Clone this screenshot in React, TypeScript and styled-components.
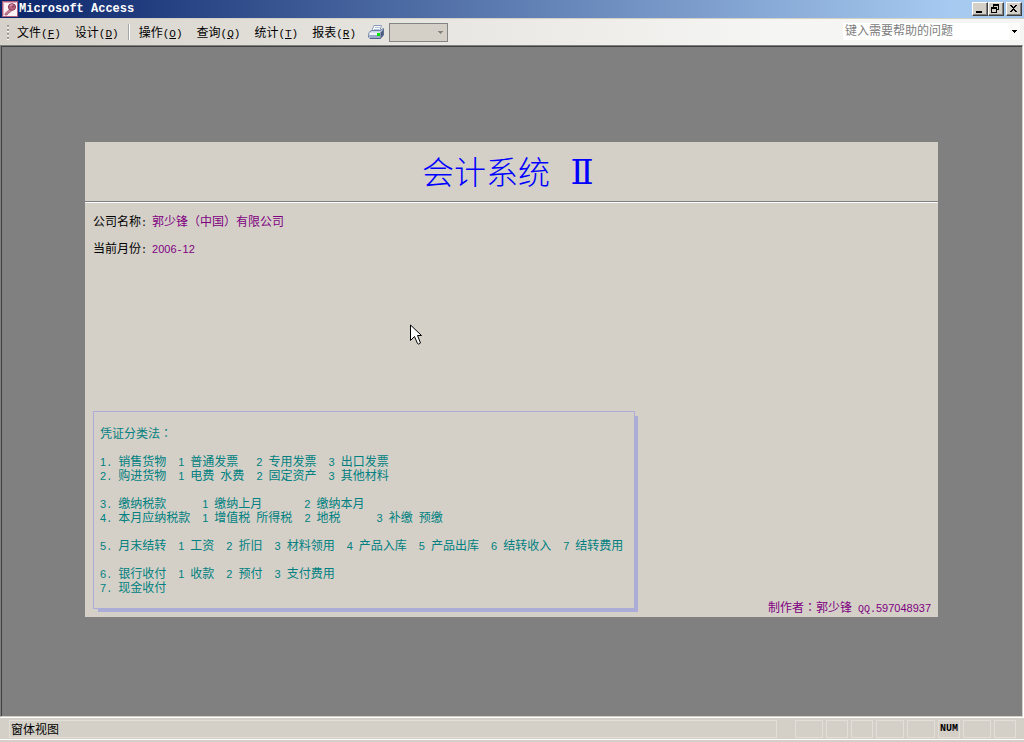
import React from "react";
import styled, { createGlobalStyle } from "styled-components";

const cjk = `"Noto Sans CJK SC", sans-serif`;
const face = "#d4d0c8";
const lilac = "#acacd8";

const GlobalStyle = createGlobalStyle`
  * { box-sizing: border-box; }
  body { margin: 0; background: ${face}; font: 12px/14px ${cjk}; color: #000; }
  button, input, select { font: inherit; color: inherit; border-radius: 0; }
`;

const Window = styled.div`
  display: flex;
  flex-direction: column;
  min-height: 100vh;
`;

const TitleBar = styled.header`
  display: flex;
  align-items: center;
  height: 18px;
  padding: 0 2px;
  background: linear-gradient(90deg, #0a246a, #a6caf0 93%);
`;

const AppTitle = styled.span`
  flex: 1;
  padding-left: 1px;
  color: #fff;
  font: bold 12px/18px "Liberation Mono", monospace;
`;

const Caption = styled.button<{ $gap?: boolean }>`
  width: 16px;
  height: 14px;
  margin-left: ${(p) => (p.$gap ? 2 : 0)}px;
  padding: 0;
  border: 1px solid;
  border-color: #fff #404040 #404040 #fff;
  box-shadow: inset -1px -1px #808080;
  background: ${face};
  svg { display: block; }
`;

const MenuBar = styled.nav`
  display: flex;
  align-items: center;
  height: 27px;
  padding: 0 4px 0 7px;
  border-top: 1px solid ${face};
  background: linear-gradient(90deg, #d6d2ca, #f5f5f3 75%);
`;

const Grip = styled.span`
  width: 3px;
  height: 15px;
  background: repeating-linear-gradient(#a09c94 0 2px, #fff 2px 3px, ${face} 3px 4px) 0 0 / 2px 100% no-repeat;
`;

const MenuItem = styled.button`
  display: flex;
  height: 22px;
  align-items: center;
  padding: 0 7px;
  border: 0;
  background: none;
  white-space: pre;
`;

const Hotkey = styled.span`
  font: 11px/0 "Liberation Mono", monospace;
`;

const Separator = styled.span`
  width: 2px;
  height: 16px;
  margin: 0 2px;
  background: linear-gradient(90deg, #a6a6a6 50%, #fff 50%);
`;

const ToolButton = styled.button`
  width: 16px;
  height: 16px;
  margin: 0 5px;
  padding: 0;
  border: 0;
  background: none;
  svg { display: block; }
`;

const Combo = styled.span`
  display: grid;
  grid-template-columns: 1fr 9px;
  align-items: center;
  width: 59px;
  height: 19px;
  border: 1px solid #848484;
  background: ${face};
`;

const ComboSelect = styled.select`
  width: 100%;
  height: 17px;
  border: 0;
  appearance: none;
  background: none;
`;

const HelpBox = styled.span`
  display: flex;
  width: 177px;
  height: 17px;
  margin: 0 0 1px auto;
  background: #fff;
`;

const HelpInput = styled.input`
  flex: 1;
  min-width: 0;
  padding: 0 2px 3px;
  border: 0;
  background: #fff;
  &::placeholder { color: #808080; opacity: 1; }
`;

const DropButton = styled.button`
  display: grid;
  place-items: center;
  width: 11px;
  padding: 0;
  border: 0;
  background: #fbfbfa;
`;

const Workspace = styled.main`
  flex: 1;
  display: flex;
  margin-right: 1px;
  padding: 95px 84px 99px 83px;
  border: 1px solid;
  border-color: #808080 ${face} ${face} #808080;
  box-shadow: inset 1px 1px #404040, 1px 0 #fff;
  background: #808080;
`;

const Form = styled.section`
  position: relative;
  flex: 1;
  display: flex;
  flex-direction: column;
  margin: 1px 0 0 1px;
  background: ${face};
`;

const Heading = styled.h1`
  display: flex;
  justify-content: center;
  gap: 16px;
  height: 60px;
  margin: 0;
  padding-right: 3px;
  border-bottom: 1px solid #808080;
  box-shadow: 0 1px #fff;
  color: #0000ff;
  font: 300 32px/56px ${cjk};
`;

const Numeral = styled.span`
  width: 32px;
  text-align: center;
  font: 34px/60px "DejaVu Serif", serif;
`;

const Details = styled.dl`
  flex: 1;
  display: flex;
  flex-direction: column;
  gap: 13px;
  margin: 0;
  padding: 12px 8px;
`;

const Detail = styled.div`
  display: flex;
  gap: 5px;
  dd { margin: 0; color: #800080; }
`;

const Footer = styled.footer`
  display: flex;
  justify-content: space-between;
  align-items: flex-end;
  padding: 0 7px 3px 8px;
`;

const Legend = styled.section`
  margin-bottom: 5px;
  padding: 14px 11px 14px 6px;
  border: 1px solid ${lilac};
  box-shadow: 4px 4px 0 -1px ${lilac};
  color: #008080;
`;

const Line = styled.p`
  height: 14px;
  margin: 0;
  white-space: pre;
`;

const Credit = styled.p`
  margin: 0;
  color: #800080;
  white-space: pre;
`;

const HalfWidth = styled.span`
  font: 10px/0 "Liberation Mono", monospace;
`;

const Digits = styled.span`
  font: 11px/0 "Liberation Sans", sans-serif;
`;

const Centred = styled.span`
  font: 12px/0 "Noto Sans CJK TC", sans-serif;
`;

const StatusBar = styled.footer`
  display: flex;
  gap: 3px;
  height: 25px;
  padding: 2px 8px 2px 9px;
  border-top: 1px solid #fff;
  background: linear-gradient(#fff, #fff) 0 21px / 100% 1px no-repeat ${face};
`;

const StatusCell = styled.span<{ $w: number }>`
  width: ${(p) => p.$w}px;
  height: 18px;
  border: 1px solid #e2dfd8;
  font: bold 10px/16px "Liberation Mono", monospace;
  padding-left: 1px;
`;

const StatusText = styled.span`
  flex: 1;
  height: 18px;
  margin-right: 15px;
  padding-left: 1px;
  border: 1px solid #e2dfd8;
  line-height: 16px;
`;

/* Sets Latin characters at half the width of a Chinese character,
   and the full-width colon in the middle of its square. */
const Mixed = ({ text }: { text: string }) => (
  <>
    {(text.match(/[0-9]+|[\x20-\x2f\x3a-\x7e]+|：|[^\x20-\x7e：]+/g) ?? []).map((run, i) => {
      if (/^[0-9]/.test(run)) return <Digits key={i}>{run}</Digits>;
      if (/^[\x20-\x7e]/.test(run)) return <HalfWidth key={i}>{run}</HalfWidth>;
      if (run === "：") return <Centred key={i} lang="zh-TW">{run}</Centred>;
      return <React.Fragment key={i}>{run}</React.Fragment>;
    })}
  </>
);

const Menu = ({ label, hot }: { label: string; hot: string }) => (
  <MenuItem type="button">
    <span>
      {label}
      <Hotkey>
        (<u>{hot}</u>)
      </Hotkey>
    </span>
  </MenuItem>
);

const AppIcon = () => (
  <svg width="16" height="16" viewBox="0 0 16 16" aria-hidden="true">
    <rect x="0.5" y="0.5" width="15" height="15" fill="#fbf3f5" stroke="#b0607c" />
    <path d="M1.5 14.500V1.500H14.500" fill="none" stroke="#e0a8bc" />
    <path d="M8 8L3 12.500V14H5L6 13V12H7L10 9.500Z" fill="#c88098" stroke="#a05870" strokeWidth="0.800" />
    <ellipse cx="10" cy="6" rx="3.600" ry="3.300" fill="#b86480" stroke="#8c3c58" />
    <path d="M8 5Q9 3.500 11 4" fill="none" stroke="#e4b4c4" />
    <circle cx="11" cy="5.500" r="1" fill="#8c3854" />
  </svg>
);

const PrinterIcon = () => (
  <svg width="16" height="16" viewBox="0 0 16 16" aria-hidden="true">
    <path d="M6 1.500H13.500L11.500 7.500H3.500Z" fill="#fff" stroke="#8a9cbc" />
    <path d="M7 3.500H12M6 5.500H11" stroke="#b4c4dc" />
    <path d="M1 8.500L3.500 6.500H12L15.500 4.500V11L12.500 14.500H2L0.500 13Z" fill="#c4d0e4" stroke="#6c80a4" />
    <path d="M1.500 8.500H12V11H1.500Z" fill="#eef2f8" />
    <path d="M1.500 11H12.500V14H2.500L1.500 13Z" fill="#9cacc8" />
    <path d="M12.500 8.500L15.500 5.500V11L12.500 14.500Z" fill="#4c5c80" />
    <path d="M2 14.500H12.500" stroke="#506088" />
    <rect x="9" y="9" width="3" height="3" fill="#00e400" />
  </svg>
);

const Arrow = ({ color }: { color: string }) => (
  <svg width="5" height="3" viewBox="0 0 5 3" shapeRendering="crispEdges" aria-hidden="true">
    <path d="M0 0H5V1H4V2H3V3H2V2H1V1H0Z" fill={color} />
  </svg>
);

const Pointer = styled.svg`
  position: absolute;
  left: 325px;
  top: 182px;
`;

const lines = [
  "凭证分类法：",
  "",
  "1. 销售货物  1 普通发票   2 专用发票  3 出口发票",
  "2. 购进货物  1 电费 水费  2 固定资产  3 其他材料",
  "",
  "3. 缴纳税款      1 缴纳上月       2 缴纳本月",
  "4. 本月应纳税款  1 增值税 所得税  2 地税      3 补缴 预缴",
  "",
  "5. 月末结转  1 工资  2 折旧  3 材料领用  4 产品入库  5 产品出库  6 结转收入  7 结转费用",
  "",
  "6. 银行收付  1 收款  2 预付  3 支付费用",
  "7. 现金收付",
];

const details = [
  ["公司名称:", "郭少锋（中国）有限公司"],
  ["当前月份:", "2006-12"],
];

const cells: [number, string][] = [
  [28, ""], [22, ""], [22, ""], [28, ""], [28, ""], [22, "NUM"], [28, ""], [22, ""],
];

export default function App() {
  return (
    <Window>
      <GlobalStyle />
      <TitleBar>
        <AppIcon />
        <AppTitle>Microsoft Access</AppTitle>
        <Caption type="button" aria-label="最小化">
          <svg width="14" height="12" shapeRendering="crispEdges"><path d="M3 8H9V10H3Z" /></svg>
        </Caption>
        <Caption type="button" aria-label="还原">
          <svg width="14" height="12" shapeRendering="crispEdges">
            <path fillRule="evenodd" d="M4 1H10V7H8V6H9V3H5V4H4ZM2 4H8V10H2ZM3 6V9H7V6Z" />
          </svg>
        </Caption>
        <Caption type="button" aria-label="关闭" $gap>
          <svg width="14" height="12" shapeRendering="crispEdges">
            <path d="M3 2H5V3H6V4H7V3H8V2H10V3H9V4H8V5H7V6H8V7H9V8H10V9H8V8H7V7H6V8H5V9H3V8H4V7H5V6H6V5H5V4H4V3H3Z" />
          </svg>
        </Caption>
      </TitleBar>
      <MenuBar>
        <Grip />
        <Menu label="文件" hot="F" />
        <Menu label="设计" hot="D" />
        <Separator />
        <Menu label="操作" hot="O" />
        <Menu label="查询" hot="Q" />
        <Menu label="统计" hot="T" />
        <Menu label="报表" hot="R" />
        <ToolButton type="button" aria-label="打印"><PrinterIcon /></ToolButton>
        <Combo>
          <ComboSelect disabled aria-label="显示比例" />
          <Arrow color="#848484" />
        </Combo>
        <HelpBox>
          <HelpInput type="text" aria-label="帮助" placeholder="键入需要帮助的问题" />
          <DropButton type="button" aria-label="展开"><Arrow color="#000" /></DropButton>
        </HelpBox>
      </MenuBar>
      <Workspace>
        <Form>
          <Heading>
            会计系统<Numeral>Ⅱ</Numeral>
          </Heading>
          <Details>
            {details.map(([name, value]) => (
              <Detail key={name}>
                <dt><Mixed text={name} /></dt>
                <dd><Mixed text={value} /></dd>
              </Detail>
            ))}
          </Details>
          <Footer>
            <Legend>
              {lines.map((line, i) => (
                <Line key={i}><Mixed text={line} /></Line>
              ))}
            </Legend>
            <Credit><Mixed text="制作者：郭少锋 QQ.597048937" /></Credit>
          </Footer>
          <Pointer width="13" height="21" viewBox="0 0 13 21" aria-hidden="true">
            <path d="M0.500 1V16.500L4.500 12.500L7.500 19.500Q8.500 21 10.500 19L7.500 11.500H11.500Z" fill="#fff" stroke="#000" />
          </Pointer>
        </Form>
      </Workspace>
      <StatusBar>
        <StatusText>窗体视图</StatusText>
        {cells.map(([width, label], i) => (
          <StatusCell key={i} $w={width}>{label}</StatusCell>
        ))}
      </StatusBar>
    </Window>
  );
}
